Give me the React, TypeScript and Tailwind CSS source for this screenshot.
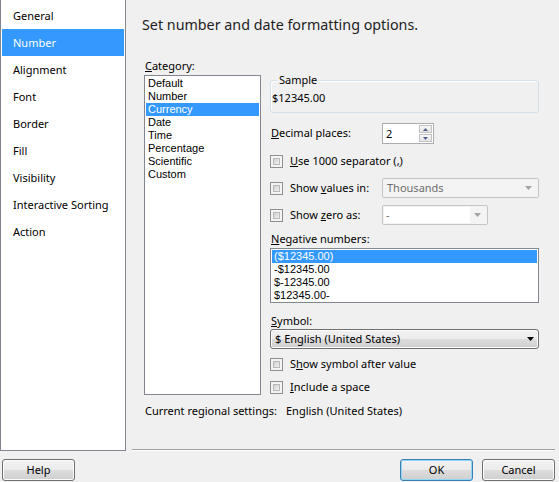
import React from "react";

function Check() {
  return (
    <div className="w-[13px] h-[13px] shrink-0 border border-[#8e8f8f] bg-[#f4f4f4] p-[2px]">
      <div className="w-full h-full border border-[#b9b9b9] bg-linear-to-br from-[#cfcfcf] to-[#f3f3f3]" />
    </div>
  );
}

function Arrow({ color, w = 7, h = 4 }: { color: string; w?: number; h?: number }) {
  return (
    <svg width={w} height={h} viewBox={`0 0 ${w} ${h}`} className="block">
      <polygon points={`0,0 ${w},0 ${w / 2},${h}`} fill={color} />
    </svg>
  );
}

function UpArrow() {
  return (
    <svg width="5" height="3" viewBox="0 0 5 3" className="block">
      <polygon points="0,3 5,3 2.5,0" fill="#4d5f8a" />
    </svg>
  );
}

function DownArrow() {
  return (
    <svg width="5" height="3" viewBox="0 0 5 3" className="block">
      <polygon points="0,0 5,0 2.5,3" fill="#4d5f8a" />
    </svg>
  );
}

const navItems = [
  "General",
  "Number",
  "Alignment",
  "Font",
  "Border",
  "Fill",
  "Visibility",
  "Interactive Sorting",
  "Action",
];

const categories = [
  "Default",
  "Number",
  "Currency",
  "Date",
  "Time",
  "Percentage",
  "Scientific",
  "Custom",
];

const negatives = ["($12345.00)", "-$12345.00", "$-12345.00", "$12345.00-"];

export default function App() {
  return (
    <div className="w-[559px] h-[482px] bg-[#f0f0f0] flex flex-col overflow-hidden font-['Noto_Sans',sans-serif] text-[11px] text-black">
      <div className="flex h-[451px]">
        <nav className="w-[126px] h-[451px] shrink-0 bg-white border-l border-r border-b border-[#828790] pt-[2px] px-[1px]">
          {navItems.map((n) => (
            <div
              key={n}
              className={
                n === "Number"
                  ? "h-[27px] leading-[27px] pl-[11px] bg-[#3399ff] text-white"
                  : "h-[27px] leading-[27px] pl-[11px]"
              }
            >
              {n}
            </div>
          ))}
        </nav>
        <div className="flex-1 flex flex-col">
          <div className="h-[56px] pl-[16px] pt-[15px] leading-[20px] text-[14.3px] text-[#1e1e1e]">
            Set number and date formatting options.
          </div>
          <div className="flex">
            <div className="ml-[18px] w-[117px] flex flex-col">
              <div className="h-[19px] leading-[19px] pl-[1px]">
                <span className="underline underline-offset-1">C</span>ategory:
              </div>
              <div className="h-[320px] border border-[#828790] bg-white p-[1px] font-['Liberation_Sans',sans-serif] text-[11px]">
                {categories.map((c) => (
                  <div
                    key={c}
                    className={
                      c === "Currency"
                        ? "h-[13px] leading-[13px] pl-[2px] bg-[#3399ff] text-white"
                        : "h-[13px] leading-[13px] pl-[2px]"
                    }
                  >
                    {c}
                  </div>
                ))}
              </div>
            </div>
            <div className="ml-[9px] w-[269px] flex flex-col pt-[24px]">
              <div className="relative h-[33px] border border-[#d5dfe5] rounded-[3px] shadow-[inset_1px_1px_0_#ffffff]">
                <span className="absolute left-[6px] top-[-9px] px-[2px] bg-[#f0f0f0] leading-[16px]">
                  Sample
                </span>
                <div className="pt-[9px] pl-[1px] leading-[16px]">$12345.00</div>
              </div>

              <div className="mt-[10px] h-[21px] flex items-center">
                <div className="w-[112px] pl-[1px]">
                  <span className="underline underline-offset-1">D</span>ecimal places:
                </div>
                <div className="w-[52px] h-[21px] border border-[#abadb3] bg-white flex">
                  <div className="flex-1 pl-[3px] leading-[19px]">2</div>
                  <div className="w-[14px] pr-[1px] py-[1px] flex flex-col gap-[1px]">
                    <div className="h-[8px] border border-[#c3c3c3] bg-linear-to-b from-[#f7f7f7] to-[#e4e4e4] flex items-center justify-center">
                      <UpArrow />
                    </div>
                    <div className="h-[8px] border border-[#c3c3c3] bg-linear-to-b from-[#f7f7f7] to-[#e4e4e4] flex items-center justify-center">
                      <DownArrow />
                    </div>
                  </div>
                </div>
              </div>

              <div className="mt-[7px] h-[20px] flex items-center">
                <Check />
                <span className="ml-[7px]">
                  <span className="underline underline-offset-1">U</span>se 1000 separator (<span className="underline underline-offset-1">,</span>)
                </span>
              </div>

              <div className="mt-[7px] h-[20px] flex items-center">
                <div className="w-[112px] flex items-center">
                  <Check />
                  <span className="ml-[7px]">
                    Show <span className="underline underline-offset-1">v</span>alues in:
                  </span>
                </div>
                <div className="w-[157px] h-[20px] border border-[#c5c5c5] rounded-[2px] bg-[#f4f4f4] flex items-center pl-[4px] pr-[6px] text-[#6d6d6d]">
                  <span className="flex-1">Thousands</span>
                  <Arrow color="#a3a3a3" />
                </div>
              </div>

              <div className="mt-[7px] h-[20px] flex items-center">
                <div className="w-[112px] flex items-center">
                  <Check />
                  <span className="ml-[7px]">
                    Show <span className="underline underline-offset-1">z</span>ero as:
                  </span>
                </div>
                <div className="w-[106px] h-[20px] border border-[#c5c5c5] rounded-[2px] bg-[#f4f4f4] flex items-center p-[1px] pr-[6px] text-[#6d6d6d]">
                  <span className="w-[86px] h-full bg-white pl-[2px] leading-[16px]">-</span>
                  <span className="flex-1" />
                  <Arrow color="#a3a3a3" />
                </div>
              </div>

              <div className="mt-[6px] h-[16px] leading-[16px] pl-[1px]">
                <span className="underline underline-offset-1">N</span>egative numbers:
              </div>
              <div className="mt-[1px] h-[55px] border border-[#828790] bg-white p-[1px] font-['Liberation_Sans',sans-serif] text-[11px]">
                {negatives.map((c, i) => (
                  <div
                    key={c}
                    className={
                      i === 0
                        ? "h-[13px] leading-[13px] pl-[2px] bg-[#3399ff] text-white"
                        : "h-[13px] leading-[13px] pl-[2px]"
                    }
                  >
                    {c}
                  </div>
                ))}
              </div>

              <div className="mt-[10px] h-[16px] leading-[16px] pl-[1px]">
                <span className="underline underline-offset-1">S</span>ymbol:
              </div>
              <div className="h-[20px] border border-[#707070] rounded-[3px] bg-[linear-gradient(#f2f2f2_0%,#ebebeb_50%,#dddddd_50%,#cfcfcf_100%)] shadow-[inset_0_0_0_1px_#fcfcfc] flex items-center pl-[4px] pr-[4px]">
                <span className="flex-1">$ English (United States)</span>
                <Arrow color="#000000" />
              </div>

              <div className="mt-[5px] h-[20px] flex items-center">
                <Check />
                <span className="ml-[7px]">
                  S<span className="underline underline-offset-1">h</span>ow symbol after value
                </span>
              </div>

              <div className="mt-[3px] h-[20px] flex items-center">
                <Check />
                <span className="ml-[7px]">
                  <span className="underline underline-offset-1">I</span>nclude a space
                </span>
              </div>
            </div>
          </div>
          <div className="mt-[6px] ml-[19px] h-[16px] leading-[16px] flex">
            <span className="w-[141px]">Current regional settings:</span>
            <span>English (United States)</span>
          </div>
          <div className="flex-1" />
          <div className="ml-[6px] mr-[4px] h-px bg-[#a0a0a0]" />
          <div className="ml-[6px] mr-[4px] h-px bg-white" />
        </div>
      </div>
      <div className="flex pt-[8px] pl-[2px] pr-[4px]">
        <button className="w-[73px] h-[22px] rounded-[3px] border border-[#707070] bg-[linear-gradient(#f2f2f2_0%,#ebebeb_50%,#dddddd_50%,#cfcfcf_100%)] shadow-[inset_0_0_0_1px_#fcfcfc] leading-[20px]">
          Help
        </button>
        <div className="flex-1" />
        <button className="w-[73px] h-[22px] rounded-[3px] border border-[#3c7fb1] bg-[linear-gradient(#f2f2f2_0%,#ebebeb_50%,#dddddd_50%,#cfcfcf_100%)] shadow-[inset_0_0_0_1px_#8fd6f9] leading-[20px]">
          OK
        </button>
        <button className="ml-[9px] w-[73px] h-[22px] rounded-[3px] border border-[#707070] bg-[linear-gradient(#f2f2f2_0%,#ebebeb_50%,#dddddd_50%,#cfcfcf_100%)] shadow-[inset_0_0_0_1px_#fcfcfc] leading-[20px]">
          Cancel
        </button>
      </div>
    </div>
  );
}
